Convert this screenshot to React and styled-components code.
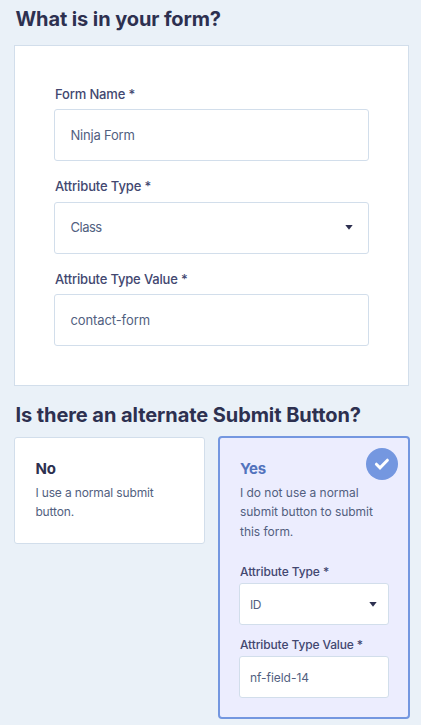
import { useState } from "react";
import styled, { createGlobalStyle } from "styled-components";

const GlobalStyle = createGlobalStyle`
	* {
		box-sizing: border-box;
	}
	body {
		margin: 0;
		background: #eaf1f8;
		font-family: Inter, "Liberation Sans", sans-serif;
	}
`;

const Page = styled.main`
	width: 421px;
	height: 725px;
	padding: 6px 10px 0 14px;
	overflow: hidden;
`;

const Title = styled.h2`
	margin: 0 0 0 1.4px;
	height: ${(props) => props.$height};
	color: #2d3050;
	font-size: 20px;
	font-weight: 650;
	line-height: ${(props) => props.$line};
	letter-spacing: ${(props) => props.$spacing};
	white-space: nowrap;
`;

const Card = styled.section`
	width: 395px;
	height: 341px;
	margin-bottom: 15px;
	padding: 39px;
	background: #fff;
	border: 1px solid #d2deeb;
`;

const Field = styled.div`
	height: ${(props) => (props.$small ? "73px" : "92.3px")};
`;

const Label = styled.label`
	display: block;
	height: ${(props) => (props.$small ? "22px" : "24.3px")};
	padding-left: 1px;
	color: #424770;
	font-size: ${(props) => (props.$small ? "12px" : "13px")};
	font-weight: 500;
	line-height: ${(props) => (props.$small ? "21px" : "18px")};
	letter-spacing: ${(props) => props.$spacing};
	white-space: nowrap;
`;

const Control = styled.div`
	display: flex;
	align-items: center;
	justify-content: space-between;
	height: ${(props) => (props.$small ? "42px" : "52px")};
	padding: ${(props) => (props.$small ? "0 11px 0 10px" : "0 15.5px")};
	background: #fff;
	border: 1px solid #d2deeb;
	border-radius: 3px;
	color: #525f7f;
	font-size: ${(props) => (props.$small ? "12px" : "13px")};
	letter-spacing: ${(props) => props.$spacing};
`;

const Value = styled.span`
	padding-bottom: ${(props) => (props.$raised ? "1.5px" : "0")};
`;

const Choices = styled.div`
	display: flex;
	align-items: flex-start;
	gap: 13px;
`;

const Choice = styled.div`
	position: relative;
	width: ${(props) => (props.$active ? "192px" : "191px")};
	height: ${(props) => (props.$active ? "283px" : "107px")};
	margin-top: ${(props) => (props.$active ? "0" : "1px")};
	padding: ${(props) => (props.$active ? "20px 19px" : "20px 19.4px")};
	background: ${(props) => (props.$active ? "#ecedfe" : "#fff")};
	border: ${(props) =>
		props.$active ? "2px solid #7497e0" : "1px solid #d2deeb"};
	border-radius: ${(props) => (props.$active ? "4px" : "3px")};
	cursor: pointer;
`;

const ChoiceName = styled.h3`
	margin: 0 0 4px 1px;
	color: ${(props) => (props.$active ? "#5273bd" : "#2d3050")};
	font-size: 15px;
	font-weight: 650;
	line-height: 21px;
	letter-spacing: ${(props) => props.$spacing};
`;

const ChoiceText = styled.p`
	margin: 0 0 0 1px;
	height: 78px;
	color: #525f7f;
	font-size: 12px;
	line-height: 19.4px;
	letter-spacing: ${(props) => props.$spacing};
	white-space: nowrap;
`;

const Badge = styled.span`
	position: absolute;
	top: 10px;
	right: 10px;
	display: flex;
	align-items: center;
	justify-content: center;
	width: 32px;
	height: 32px;
	background: #7497e0;
	border-radius: 50%;
`;

function Caret() {
	return (
		<svg width="8" height="5" viewBox="0 0 8 5">
			<path d="M0.3 0h7.4L4 4.7z" fill="#2d3050" />
		</svg>
	);
}

function FormField({ label, value, select, small, labelSpacing, spacing }) {
	return (
		<Field $small={small}>
			<Label $small={small} $spacing={labelSpacing}>
				{label}
			</Label>
			<Control $small={small} $spacing={spacing}>
				<Value $raised={select && !small}>{value}</Value>
				{select && <Caret />}
			</Control>
		</Field>
	);
}

function App() {
	const [alternate, setAlternate] = useState(true);

	return (
		<>
			<GlobalStyle />
			<Page>
				<Title $height="39px" $line="26px" $spacing="-0.1px">
					What is in your form?
				</Title>
				<Card>
					<FormField
						label="Form Name *"
						value="Ninja Form"
						labelSpacing="-0.17px"
						spacing="-0.2px"
					/>
					<FormField
						label="Attribute Type *"
						value="Class"
						select
						labelSpacing="-0.13px"
						spacing="-0.5px"
					/>
					<FormField
						label="Attribute Type Value *"
						value="contact-form"
						labelSpacing="-0.17px"
						spacing="-0.1px"
					/>
				</Card>
				<Title $height="35px" $line="28px" $spacing="-0.07px">
					Is there an alternate Submit Button?
				</Title>
				<Choices>
					<Choice
						$active={!alternate}
						onClick={() => setAlternate(false)}
					>
						<ChoiceName $active={!alternate} $spacing="0">
							No
						</ChoiceName>
						<ChoiceText $spacing="-0.14px">
							I use a normal submit
							<br />
							button.
						</ChoiceText>
					</Choice>
					<Choice
						$active={alternate}
						onClick={() => setAlternate(true)}
					>
						<ChoiceName $active={alternate} $spacing="-0.2px">
							Yes
						</ChoiceName>
						<ChoiceText $spacing="-0.03px">
							I do not use a normal
							<br />
							submit button to submit
							<br />
							this form.
						</ChoiceText>
						{alternate && (
							<>
								<FormField
									small
									label="Attribute Type *"
									value="ID"
									select
									labelSpacing="-0.1px"
									spacing="-0.5px"
								/>
								<FormField
									small
									label="Attribute Type Value *"
									value="nf-field-14"
									labelSpacing="-0.13px"
									spacing="-0.05px"
								/>
								<Badge>
									<svg
										width="16"
										height="12"
										viewBox="0 0 16 12"
										fill="none"
										stroke="#fff"
										strokeWidth="3"
										strokeLinecap="round"
									>
										<path d="M2.4 6.2l3.6 3.6 7.4-7.6" />
									</svg>
								</Badge>
							</>
						)}
					</Choice>
				</Choices>
			</Page>
		</>
	);
}

export default App;
